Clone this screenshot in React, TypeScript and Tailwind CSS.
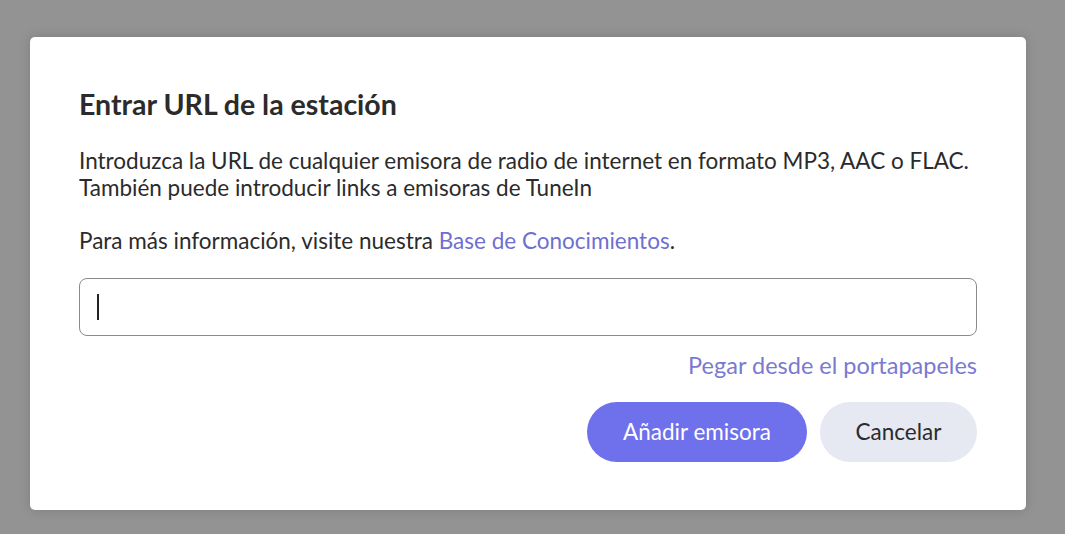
import React from "react";

export default function App() {
  return (
    <div
      className="w-[1065px] h-[534px] bg-[#939393] pt-[37px] pl-[30px]"
      style={{ fontFamily: "Lato, 'Noto Sans', sans-serif" }}
    >
      <div className="w-[996px] h-[473px] bg-white rounded-[5px] shadow-[0_0_12px_rgba(0,0,0,0.15)] px-[49px] pt-[52px]">
        <h1 className="text-[28.5px] leading-[30px] font-bold text-[#2b2b2b]">
          Entrar URL de la estación
        </h1>
        <p className="mt-[28px] text-[22.5px] leading-[27px] text-[#2b2b2b]">
          Introduzca la URL de cualquier emisora de radio de internet en formato MP3, AAC o FLAC.
          <br />
          También puede introducir links a emisoras de TuneIn
        </p>
        <p className="mt-[26px] text-[22.5px] leading-[27px] text-[#2b2b2b]">
          Para más información, visite nuestra{" "}
          <span className="text-[#6f6fcf]">Base de Conocimientos</span>.
        </p>
        <div className="mt-[24px] h-[58px] rounded-[8px] border border-[#8a8a8a] flex items-center pl-[17px]">
          <div className="w-[2px] h-[26px] bg-[#222]" />
        </div>
        <div className="mt-[16px] flex justify-end text-[23.5px] leading-[27px] text-[#7a7ad0]">
          Pegar desde el portapapeles
        </div>
        <div className="mt-[23px] flex justify-end gap-[13px]">
          <button className="w-[220px] h-[60px] rounded-full bg-[#6f70ec] text-white text-[22.5px]">
            Añadir emisora
          </button>
          <button className="w-[157px] h-[60px] rounded-full bg-[#e6e8f2] text-[#2b2b2b] text-[22.5px]">
            Cancelar
          </button>
        </div>
      </div>
    </div>
  );
}
